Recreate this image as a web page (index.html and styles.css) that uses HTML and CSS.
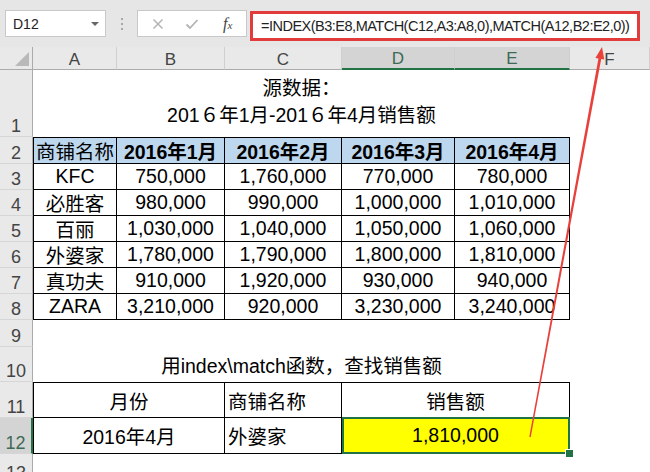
FILE: index.html
```html
<!DOCTYPE html>
<html lang="zh">
<head>
<meta charset="utf-8">
<title>Excel INDEX MATCH</title>
<link rel="stylesheet" href="styles.css">
</head>
<body>
<div class="fbar">
  <div class="namebox"><span>D12</span><span class="dd"></span></div>
  <div class="grip"><i></i><i></i><i></i></div>
  <div class="btns">
    <svg class="ic-x" width="12" height="12" viewBox="0 0 12 12"><path d="M1.5 1.5 L10.5 10.5 M10.5 1.5 L1.5 10.5" stroke="#b4b4b4" stroke-width="1.5" fill="none"/></svg>
    <svg class="ic-ok" width="14" height="12" viewBox="0 0 14 12"><path d="M1.5 6.5 L5 10 L12.5 2" stroke="#b4b4b4" stroke-width="1.8" fill="none"/></svg>
    <span class="fx">f<small>x</small></span>
  </div>
  <div class="formula">=INDEX(B3:E8,MATCH(C12,A3:A8,0),MATCH(A12,B2:E2,0))</div>
</div>
<div class="sheet">
  <div class="ch corner"><span class="tri"></span></div>
  <div class="ch">A</div><div class="ch">B</div><div class="ch">C</div>
  <div class="ch sel">D</div><div class="ch sel">E</div><div class="ch">F</div>

  <div class="rh">1</div>
  <div class="c s5 title"><span>源数据：</span><span>201６年1月-201６年4月销售额</span></div>
  <div class="c"></div>

  <div class="rh">2</div>
  <div class="c t tt tl blue nb">商铺名称</div>
  <div class="c t tt blue">2016年1月</div>
  <div class="c t tt blue">2016年2月</div>
  <div class="c t tt blue">2016年3月</div>
  <div class="c t tt blue">2016年4月</div>
  <div class="c"></div>

  <div class="rh">3</div>
  <div class="c t tl">KFC</div><div class="c t">750,000</div><div class="c t">1,760,000</div><div class="c t">770,000</div><div class="c t">780,000</div><div class="c"></div>
  <div class="rh">4</div>
  <div class="c t tl">必胜客</div><div class="c t">980,000</div><div class="c t">990,000</div><div class="c t">1,000,000</div><div class="c t">1,010,000</div><div class="c"></div>
  <div class="rh">5</div>
  <div class="c t tl">百丽</div><div class="c t">1,030,000</div><div class="c t">1,040,000</div><div class="c t">1,050,000</div><div class="c t">1,060,000</div><div class="c"></div>
  <div class="rh">6</div>
  <div class="c t tl">外婆家</div><div class="c t">1,780,000</div><div class="c t">1,790,000</div><div class="c t">1,800,000</div><div class="c t">1,810,000</div><div class="c"></div>
  <div class="rh">7</div>
  <div class="c t tl">真功夫</div><div class="c t">910,000</div><div class="c t">1,920,000</div><div class="c t">930,000</div><div class="c t">940,000</div><div class="c"></div>
  <div class="rh">8</div>
  <div class="c t tl">ZARA</div><div class="c t">3,210,000</div><div class="c t">920,000</div><div class="c t">3,230,000</div><div class="c t">3,240,000</div><div class="c"></div>

  <div class="rh">9</div>
  <div class="c s6"></div>

  <div class="rh">10</div>
  <div class="c s5">用index\match函数，查找销售额</div>
  <div class="c"></div>

  <div class="rh">11</div>
  <div class="c s2 t tt tl">月份</div>
  <div class="c t tt left">商铺名称</div>
  <div class="c s2 t tt">销售额</div>
  <div class="c"></div>

  <div class="rh sel">12</div>
  <div class="c s2 t tl">2016年4月</div>
  <div class="c t left">外婆家</div>
  <div class="c s2 t hl">1,810,000</div>
  <div class="c"></div>

  <div class="rh">13</div>
  <div class="c s6"></div>
</div>
<svg class="arrow" width="650" height="472" viewBox="0 0 650 472">
  <polygon points="602,47 604.25,59.62 601.2,59.05 530.69,437.13 529.31,436.87 598.44,58.55 595.4,57.98" fill="#e8413c"/>
</svg>
</body>
</html>
```
FILE: styles.css
```css
* { box-sizing: border-box; margin: 0; padding: 0; }
body {
  margin: 0;
  width: 650px;
  height: 472px;
  overflow: hidden;
  background: #fff;
  position: relative;
  font-family: "Liberation Sans", "Noto Sans CJK SC", sans-serif;
  color: #000;
}
.fbar {
  height: 47px;
  background: #e6e6e6;
  display: flex;
  align-items: flex-start;
  padding: 10px 0 0 5px;
}
.namebox {
  width: 101px;
  height: 27px;
  background: #fff;
  border: 1px solid #c8c8c8;
  display: flex;
  align-items: center;
  justify-content: space-between;
  padding: 0 6px 0 7px;
  font-size: 14px;
  color: #222;
}
.dd {
  width: 0; height: 0;
  border-left: 4px solid transparent;
  border-right: 4px solid transparent;
  border-top: 4px solid #666;
}
.grip {
  width: 31px;
  height: 27px;
  display: flex;
  flex-direction: column;
  align-items: center;
  gap: 3px;
  padding-top: 8px;
}
.grip i { display: block; width: 2px; height: 2px; background: #a8a8a8; }
.btns {
  width: 110px;
  height: 27px;
  background: #fff;
  border: 1px solid #c8c8c8;
  display: flex;
  align-items: center;
  padding-left: 14px;
}
.ic-x { margin-right: 21px; }
.ic-ok { margin-right: 24px; }
.fx {
  font-family: "Liberation Serif", serif;
  font-style: italic;
  font-size: 16px;
  color: #444;
}
.fx small { font-size: 11px; }
.formula {
  margin-left: 3px;
  margin-top: 1px;
  width: 390px;
  height: 30px;
  border: 3px solid #e23b3b;
  background: #fff;
  font-size: 14.5px;
  letter-spacing: -0.5px;
  padding-left: 8px;
  display: flex;
  align-items: center;
  color: #222;
  white-space: nowrap;
  overflow: hidden;
}
.sheet {
  display: grid;
  grid-template-columns: 33px 84px 108px 117px 113px 115px 80px;
  grid-template-rows: 23px 67px 27px repeat(6, 26px) 27px 35px 36px 36px 30px;
}
.ch {
  background: #e9e9e9;
  border-right: 1px solid #cfcfcf;
  border-bottom: 1px solid #ababab;
  font-size: 17px;
  color: #444;
  display: flex;
  align-items: center;
  justify-content: center;
  padding-top: 3px;
}
.ch.sel {
  background: #d4d4d4;
  border-bottom: 2px solid #217346;
  color: #3c6a54;
}
.corner {
  border-right: 1px solid #ababab;
  justify-content: flex-end;
  align-items: flex-end;
  padding: 0 3px 3px 0;
}
.tri {
  width: 0; height: 0;
  border-left: 14px solid transparent;
  border-bottom: 14px solid #b9b9b9;
}
.rh {
  background: #e9e9e9;
  border-right: 1px solid #ababab;
  border-bottom: 1px solid #d6d6d6;
  font-size: 18px;
  line-height: 20px;
  color: #444;
  display: flex;
  align-items: flex-end;
  justify-content: center;
}
.rh.sel {
  background: #d4d4d4;
  border-right: 2px solid #217346;
  color: #3c6a54;
}
.c {
  font-size: 19.5px;
  display: flex;
  align-items: center;
  justify-content: center;
  white-space: nowrap;
}
.s2 { grid-column: span 2; }
.s5 { grid-column: span 5; }
.s6 { grid-column: span 6; }
.t { border-right: 1px solid #000; border-bottom: 1px solid #000; }
.tt { border-top: 1px solid #000; }
.tl { border-left: 1px solid #000; }
.blue { background: #bdd7ee; font-weight: bold; }
.blue.nb { font-weight: normal; }
.title {
  flex-direction: column;
  justify-content: flex-end;
  line-height: 27px;
  padding-bottom: 8px;
}
.left { justify-content: flex-start; padding-left: 3px; }
.hl { background: #ffff00; position: relative; }
.hl::before {
  content: "";
  position: absolute;
  top: -1px; left: 0; right: -1px; bottom: -1px;
  border: 2px solid #217346;
}
.hl::after {
  content: "";
  position: absolute;
  right: -5px; bottom: -5px;
  width: 7px; height: 7px;
  background: #217346;
  border: 1px solid #fff;
}
.arrow {
  position: absolute;
  top: 0; left: 0;
  pointer-events: none;
}
```
